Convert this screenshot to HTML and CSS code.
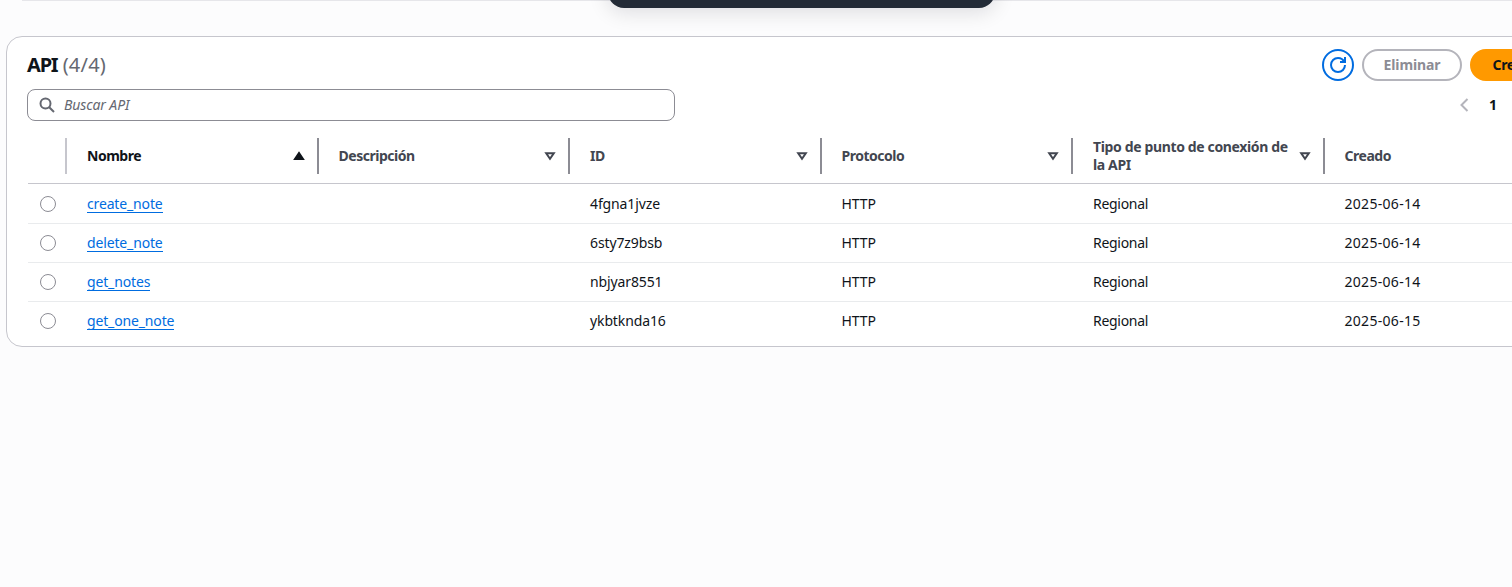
FILE: index.html
```html
<!DOCTYPE html>
<html lang="es">
<head>
<meta charset="utf-8">
<title>API</title>
<link rel="stylesheet" href="styles.css">
</head>
<body>
<div class="panel-above"></div>
<div class="flash"></div>
<main class="container">
  <header class="header">
    <h2 class="title"><span class="title-name">API</span> <span class="counter">(4/4)</span></h2>
    <div class="actions">
      <button class="btn btn-icon" aria-label="Actualizar"><svg width="16" height="16" viewBox="0 0 16 16"><path d="M10 5h5V0M15 8c0 3.9-3.1 7-7 7s-7-3.1-7-7 3.1-7 7-7c2.8 0 5.2 1.6 6.3 4"/></svg></button>
      <button class="btn btn-disabled" disabled>Eliminar</button>
      <button class="btn btn-primary">Crear API</button>
    </div>
  </header>
  <div class="tools">
    <label class="search">
      <svg width="16" height="16" viewBox="0 0 16 16"><circle cx="6.5" cy="6.5" r="5"/><path d="m10.2 10.2 4.8 4.8"/></svg>
      <span class="placeholder">Buscar API</span>
    </label>
    <nav class="pages">
      <svg width="10" height="14" viewBox="0 0 10 14"><path d="M8.5 1 2.5 7l6 6"/></svg>
      <span class="page">1</span>
    </nav>
  </div>
  <div class="table">
    <div class="row head">
      <div class="cell pick"></div>
      <div class="cell sorted"><span>Nombre</span><svg class="caret solid" width="12" height="10" viewBox="0 0 12 10"><path d="M2 8h8L6 2z"/></svg></div>
      <div class="cell"><span>Descripción</span><svg class="caret" width="12" height="10" viewBox="0 0 12 10"><path d="M2.2 2.2h7.6L6 7.8z"/></svg></div>
      <div class="cell"><span>ID</span><svg class="caret" width="12" height="10" viewBox="0 0 12 10"><path d="M2.2 2.2h7.6L6 7.8z"/></svg></div>
      <div class="cell"><span>Protocolo</span><svg class="caret" width="12" height="10" viewBox="0 0 12 10"><path d="M2.2 2.2h7.6L6 7.8z"/></svg></div>
      <div class="cell"><span class="wide">Tipo de punto de conexión de<br>la API</span><svg class="caret" width="12" height="10" viewBox="0 0 12 10"><path d="M2.2 2.2h7.6L6 7.8z"/></svg></div>
      <div class="cell"><span>Creado</span></div>
    </div>
    <div class="row"><div class="cell pick"><i class="radio"></i></div><div class="cell"><a class="link">create_note</a></div><div class="cell"></div><div class="cell id">4fgna1jvze</div><div class="cell http">HTTP</div><div class="cell">Regional</div><div class="cell date">2025-06-14</div></div>
    <div class="row"><div class="cell pick"><i class="radio"></i></div><div class="cell"><a class="link">delete_note</a></div><div class="cell"></div><div class="cell id">6sty7z9bsb</div><div class="cell http">HTTP</div><div class="cell">Regional</div><div class="cell date">2025-06-14</div></div>
    <div class="row"><div class="cell pick"><i class="radio"></i></div><div class="cell"><a class="link">get_notes</a></div><div class="cell"></div><div class="cell id">nbjyar8551</div><div class="cell http">HTTP</div><div class="cell">Regional</div><div class="cell date">2025-06-14</div></div>
    <div class="row"><div class="cell pick"><i class="radio"></i></div><div class="cell"><a class="link">get_one_note</a></div><div class="cell"></div><div class="cell id">ykbtknda16</div><div class="cell http">HTTP</div><div class="cell">Regional</div><div class="cell date">2025-06-15</div></div>
  </div>
</main>
</body>
</html>
```
FILE: styles.css
```css
* { box-sizing: border-box; }
html, body { height: 100%; }
body {
  margin: 0;
  overflow: hidden;
  background: #fcfcfd;
  color: #0f141a;
  font: 14px/20px "Noto Sans", "Open Sans", sans-serif;
}
svg { display: block; fill: none; stroke: currentColor; stroke-width: 2; }
.panel-above { height: 1px; margin-left: 22px; background: #e6e6ea; }
.flash {
  position: absolute;
  top: -40px;
  left: 608px;
  width: 387px;
  height: 48px;
  border-radius: 16px;
  background: #232b37;
  box-shadow: 0 4px 20px 1px rgba(0, 7, 22, .12);
}
.container {
  width: 1650px;
  height: 311px;
  margin: 35px 0 0 6px;
  padding: 12px 20px 0;
  border: 1px solid #c6c6cd;
  border-radius: 16px;
  background: #fff;
}
.header { display: flex; height: 32px; align-items: center; }
.title { width: 1295px; margin: 0; font-size: 20px; line-height: 24px; }
.title-name { letter-spacing: -1.2px; }
.counter { color: #656871; font-weight: 400; letter-spacing: .2px; }
.actions { display: flex; gap: 8px; }
.btn {
  display: flex;
  align-items: center;
  justify-content: center;
  height: 32px;
  padding: 0;
  border: 2px solid #006ce0;
  border-radius: 20px;
  background: #fff;
  color: #006ce0;
  font: bold 14px/20px "Noto Sans", "Open Sans", sans-serif;
}
.btn-icon { width: 32px; }
.btn-disabled { width: 100px; border-color: #b4b4bb; color: #8c8c94; letter-spacing: -.1px; }
.btn-primary { width: 107px; border-color: #ff9900; background: #ff9900; color: #0f141a; letter-spacing: -.4px; }
.tools { display: flex; height: 32px; margin-top: 8px; align-items: center; }
.search {
  display: flex;
  width: 648px;
  height: 32px;
  padding-left: 11px;
  gap: 9px;
  align-items: center;
  border: 1px solid #8c8c94;
  border-radius: 8px;
  color: #656871;
}
.placeholder { font-style: italic; letter-spacing: -.1px; }
.pages { display: flex; margin-left: 784px; gap: 20px; align-items: center; color: #b4b4bb; }
.page { color: #0f141a; font-weight: 700; }
.table { margin: 7px 0 0 1px; }
.row {
  display: grid;
  grid-template-columns: 39px repeat(6, 251.5px);
  height: 39px;
  border-bottom: 1px solid #e9ebed;
}
.row:nth-child(2) { height: 40px; }
.row:last-child { height: 38px; border-bottom: 0; }
.cell { display: flex; align-items: center; padding-left: 20px; letter-spacing: -.3px; }
.id { letter-spacing: -.12px; }
.http { letter-spacing: -.05px; }
.date { letter-spacing: .3px; }
.pick { padding-left: 12px; }
.radio { width: 16px; height: 16px; border: 1px solid #8c8c94; border-radius: 50%; }
.link { height: 18px; line-height: 18px; border-bottom: 1px solid #006ce0; color: #006ce0; letter-spacing: -.15px; }
.head { height: 56px; align-items: center; border-bottom-color: #c6c6cd; }
.head .cell {
  justify-content: space-between;
  height: 36px;
  padding-right: 12px;
  border-right: 2px solid #8c8c94;
  color: #424650;
  font-weight: 700;
  line-height: 18px;
  letter-spacing: -.48px;
}
.head .pick { border-color: #c6c6cd; }
.head .sorted { color: #0f141a; }
.wide { letter-spacing: -.36px; }
.solid { fill: currentColor; }
```
